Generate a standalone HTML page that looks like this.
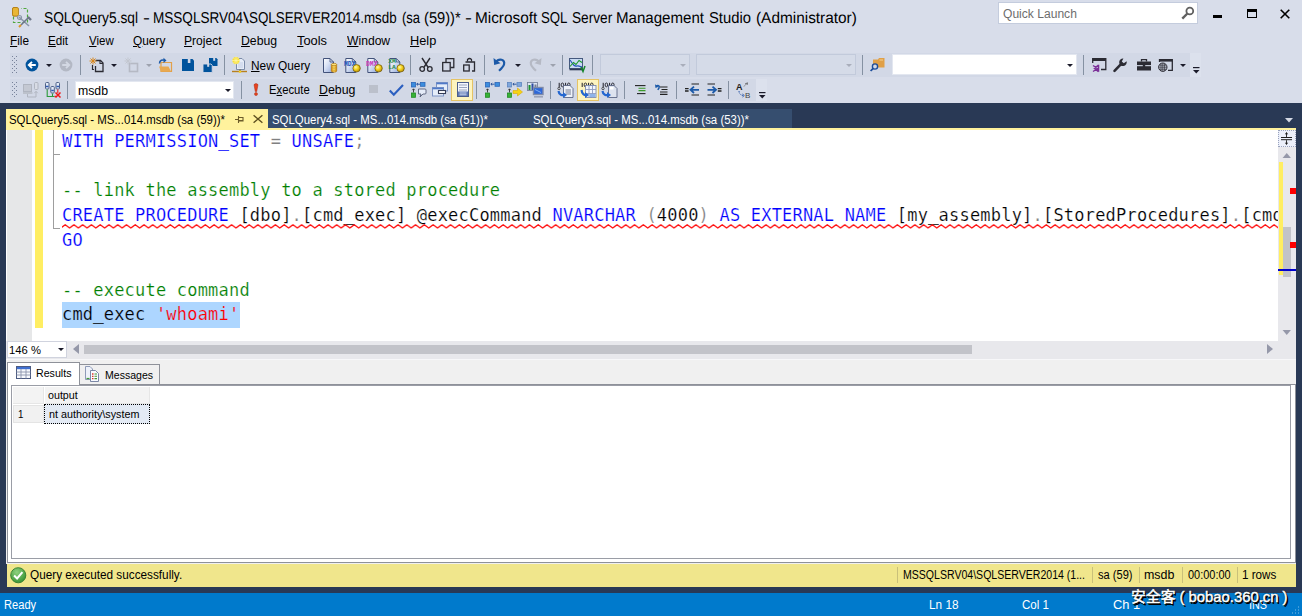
<!DOCTYPE html>
<html><head><meta charset="utf-8"><title>SQLQuery5.sql - Microsoft SQL Server Management Studio</title>
<style>
*{box-sizing:border-box;margin:0;padding:0}
html,body{width:1302px;height:616px;overflow:hidden;background:#D8DDEA}
body{position:relative;font-family:"Liberation Sans",sans-serif;font-size:12px;color:#000}
.a{position:absolute}
.t{position:absolute;white-space:pre;line-height:1;font-size:12px}
u{text-decoration:underline;text-underline-offset:1px;text-decoration-thickness:1px}
svg{position:absolute;overflow:visible}
.sep{position:absolute;width:1px;background:#8591A2}
.code{position:absolute;left:62px;white-space:pre;font-family:"DejaVu Sans Mono","Liberation Mono",monospace;font-size:17px;letter-spacing:0.2px;line-height:25px;height:25px;-webkit-text-stroke:0.2px #fff}
.us{-webkit-text-stroke:0.35px currentColor}
.kw{color:#0000FF}.cm{color:#008000}.gr{color:#808080}.st{color:#FF0000}
.hl{position:absolute;background:#FDF4BF;border:1px solid #E5C365}
#status .t{color:#fff;top:5.8px}
</style></head><body>

<!-- ===== title bar ===== -->
<svg style="left:12px;top:7px" width="21" height="21" viewBox="0 0 21 21">
 <rect x="1.5" y="1.5" width="14" height="14" fill="none" stroke="#4FA83D" stroke-width="1.2" stroke-dasharray="3 2"/>
 <rect x="0.5" y="0.5" width="6" height="8.5" rx="1.5" fill="#E9B634" stroke="#B07A12" stroke-width="0.8"/>
 <rect x="5" y="0" width="4" height="10" fill="#D8DDEA"/>
 <rect x="0.5" y="0.5" width="6" height="8.5" rx="1.5" fill="#E9B634" stroke="#B07A12" stroke-width="0.8"/>
 <path d="M7 10 L17 19" stroke="#8A96A8" stroke-width="1.6"/>
 <path d="M17 10 L9 18" stroke="#6C7687" stroke-width="1.6"/>
 <path d="M9 18 L7 20" stroke="#D9962A" stroke-width="2"/>
 <path d="M16 10 l3 3" stroke="#6C7687" stroke-width="2.4"/>
 <circle cx="7.5" cy="10.5" r="2" fill="none" stroke="#8A96A8" stroke-width="1.2"/>
</svg>
<div class="t" id="t1" style="left:43.91px;top:11.3px;font-size:15.7px;text-rendering:geometricPrecision;transform-origin:0 0;transform:scaleX(0.8768)">SQLQuery5.sql </div>
<div class="t" id="t2" style="left:143.13px;top:11.3px;font-size:15.7px;text-rendering:geometricPrecision;transform-origin:0 0;transform:scaleX(1.3333)">- </div>
<div class="t" id="t3" style="left:152.75px;top:11.3px;font-size:15.7px;text-rendering:geometricPrecision;transform-origin:0 0;transform:scaleX(0.8633)">MSSQLSRV04</div>
<div class="t" id="t4" style="left:243.00px;top:11.3px;font-size:15.7px;text-rendering:geometricPrecision;transform-origin:0 0;transform:scaleX(1.3412)">\</div>
<div class="t" id="t5" style="left:248.89px;top:11.3px;font-size:15.7px;text-rendering:geometricPrecision;transform-origin:0 0;transform:scaleX(0.8518)">SQLSERVER2014.msdb </div>
<div class="t" id="t6" style="left:401.70px;top:11.3px;font-size:15.7px;text-rendering:geometricPrecision;transform-origin:0 0;transform:scaleX(0.8289)">(sa </div>
<div class="t" id="t7" style="left:424.39px;top:11.3px;font-size:15.7px;text-rendering:geometricPrecision;transform-origin:0 0;transform:scaleX(0.9342)">(59))* </div>
<div class="t" id="t8" style="left:464.76px;top:11.3px;font-size:15.7px;text-rendering:geometricPrecision;transform-origin:0 0;transform:scaleX(1.3333)">- </div>
<div class="t" id="t9" style="left:474.54px;top:11.3px;font-size:15.7px;text-rendering:geometricPrecision;transform-origin:0 0;transform:scaleX(0.9783)">Microsoft </div>
<div class="t" id="t10" style="left:541.41px;top:11.3px;font-size:15.7px;text-rendering:geometricPrecision;transform-origin:0 0;transform:scaleX(0.8430)">SQL </div>
<div class="t" id="t11" style="left:571.73px;top:11.3px;font-size:15.7px;text-rendering:geometricPrecision;transform-origin:0 0;transform:scaleX(0.8711)">Server </div>
<div class="t" id="t12" style="left:616.21px;top:11.3px;font-size:15.7px;text-rendering:geometricPrecision;transform-origin:0 0;transform:scaleX(0.9607)">Management </div>
<div class="t" id="t13" style="left:709.38px;top:11.3px;font-size:15.7px;text-rendering:geometricPrecision;transform-origin:0 0;transform:scaleX(0.9434)">Studio </div>
<div class="t" id="t14" style="left:756.43px;top:11.3px;font-size:15.7px;text-rendering:geometricPrecision;transform-origin:0 0;transform:scaleX(0.9806)">(Administrator)</div>
<div class="a" style="left:998px;top:2px;width:199.5px;height:21.5px;background:#fff;border:1px solid #C4CCDD"></div>
<div class="t" id="qlt" style="left:1002.50px;top:8px;color:#6D6D6D;transform-origin:0 0;transform:scaleX(1.0069)">Quick Launch</div>
<svg style="left:1181px;top:5.5px" width="14" height="14" viewBox="0 0 14 14"><circle cx="8.8" cy="5" r="3.4" fill="none" stroke="#606060" stroke-width="1.8"/><path d="M6.4 7.5 L1.3 12.6" stroke="#606060" stroke-width="2.4"/></svg>
<div class="a" style="left:1213px;top:15px;width:9px;height:3px;background:#000"></div>
<div class="a" style="left:1246.5px;top:9px;width:10px;height:9px;border:1px solid #000;border-top-width:3px"></div>
<svg style="left:1280px;top:9px" width="10" height="10" viewBox="0 0 10 10"><path d="M0.7 0.7 L9.3 9.3 M9.3 0.7 L0.7 9.3" stroke="#000" stroke-width="1.6"/></svg>

<!-- ===== menu ===== -->
<div class="t" id="m1" style="left:9.85px;top:35px;transform-origin:0 0;transform:scaleX(0.9833)"><u>F</u>ile</div>
<div class="t" id="m2" style="left:47.84px;top:35px;transform-origin:0 0;transform:scaleX(0.9722)"><u>E</u>dit</div>
<div class="t" id="m3" style="left:88.70px;top:35px;transform-origin:0 0;transform:scaleX(0.9592)"><u>V</u>iew</div>
<div class="t" id="m4" style="left:132.70px;top:35px;transform-origin:0 0;transform:scaleX(0.9906)"><u>Q</u>uery</div>
<div class="t" id="m5" style="left:184.27px;top:35px;transform-origin:0 0;transform:scaleX(1.0055)"><u>P</u>roject</div>
<div class="t" id="m6" style="left:241.12px;top:35px;transform-origin:0 0;transform:scaleX(1.0209)"><u>D</u>ebug</div>
<div class="t" id="m7" style="left:296.93px;top:35px;transform-origin:0 0;transform:scaleX(1.0716)"><u>T</u>ools</div>
<div class="t" id="m8" style="left:347.20px;top:35px;transform-origin:0 0;transform:scaleX(1.0105)"><u>W</u>indow</div>
<div class="t" id="m9" style="left:409.77px;top:35px;transform-origin:0 0;transform:scaleX(1.0624)"><u>H</u>elp</div>
<!-- ===== toolbar row 1 ===== -->
<svg width="0" height="0" style="left:0;top:0"><defs><linearGradient id="dg" x1="0" y1="0" x2="1" y2="1"><stop offset="0" stop-color="#FFFFFF"/><stop offset="0.45" stop-color="#D5DFF3"/><stop offset="1" stop-color="#8FA6DA"/></linearGradient><radialGradient id="yb" cx="0.38" cy="0.35" r="0.75"><stop offset="0" stop-color="#FFF7A8"/><stop offset="0.45" stop-color="#F5D21C"/><stop offset="1" stop-color="#A87E08"/></radialGradient><linearGradient id="cy" x1="0" y1="0" x2="1" y2="0"><stop offset="0" stop-color="#D98E12"/><stop offset="0.5" stop-color="#FBE069"/><stop offset="1" stop-color="#D08A10"/></linearGradient></defs></svg>

<div class="a" style="left:10px;top:53px;width:1180px;height:24px;background:#D2D8E6"></div>
<div class="a" style="left:1190px;top:53px;width:11px;height:24px;background:#DCE1ED"></div>
<svg style="left:12px;top:56px" width="5" height="18" viewBox="0 0 5 18"><defs><pattern id="gp1" width="4" height="4" patternUnits="userSpaceOnUse"><rect x="0" y="0" width="1" height="1" fill="#77829A"/><rect x="2" y="2" width="1" height="1" fill="#77829A"/></pattern></defs><rect width="5" height="18" fill="url(#gp1)"/></svg>
<svg style="left:25px;top:58px" width="14" height="14" viewBox="0 0 14 14"><circle cx="7" cy="7" r="6.4" fill="#00539C"/><path d="M10.8 7 H4.2 M7 3.8 L3.8 7 L7 10.2" fill="none" stroke="#fff" stroke-width="1.9"/></svg>
<svg style="left:46px;top:64px" width="6" height="3.4" viewBox="0 0 7 4"><path d="M0 0 H7 L3.5 3.6 Z" fill="#1B1B2A"/></svg>
<svg style="left:59px;top:58px" width="14" height="14" viewBox="0 0 14 14"><circle cx="7" cy="7" r="6.4" fill="#B3B8C4"/><path d="M3.2 7 H9.8 M7 3.8 L10.2 7 L7 10.2" fill="none" stroke="#D3D8E3" stroke-width="1.9"/></svg>
<div class="sep" style="left:80px;top:55px;height:20px"></div>
<svg style="left:89px;top:57px" width="16" height="16" viewBox="0 0 16 16"><path d="M6.5 3.5 H11.5 L14 6 V14.5 H6.5 V9" fill="none" stroke="#2B2B33" stroke-width="1.3"/><path d="M11 3.5 V6.5 H14" fill="none" stroke="#2B2B33" stroke-width="1.1"/><path d="M3.5 8 V12.5 H5" fill="none" stroke="#2B2B33" stroke-width="1.2"/><path d="M4 0.5 V7.5 M0.5 4 H7.5 M1.5 1.5 L6.5 6.5 M6.5 1.5 L1.5 6.5" stroke="#D8861C" stroke-width="1"/></svg>
<svg style="left:111px;top:64px" width="6" height="3.4" viewBox="0 0 7 4"><path d="M0 0 H7 L3.5 3.6 Z" fill="#1B1B2A"/></svg>
<svg style="left:124px;top:57px" width="16" height="16" viewBox="0 0 16 16"><rect x="5.5" y="6.5" width="8" height="8" fill="none" stroke="#B5B9C4" stroke-width="1.6"/><path d="M4 0.5 V7.5 M0.5 4 H7.5 M1.5 1.5 L6.5 6.5 M6.5 1.5 L1.5 6.5" stroke="#C2C6CF" stroke-width="1"/></svg>
<svg style="left:146px;top:64px" width="6" height="3.4" viewBox="0 0 7 4"><path d="M0 0 H7 L3.5 3.6 Z" fill="#9DA2AE"/></svg>
<svg style="left:158px;top:57px" width="16" height="16" viewBox="0 0 16 16"><path d="M3 5.5 H13.5 V14.5 H3 Z" fill="none" stroke="#E2A04A" stroke-width="1.2"/><path d="M1 9.5 H10.5 L13 14.5 H3 Z" fill="#E8A951"/><path d="M1.5 6.5 C1.5 3 4.5 2.6 7 3.2" fill="none" stroke="#1C5AA8" stroke-width="1.6"/><path d="M5.5 0.8 L8.5 3.4 L5.5 6 Z" fill="#1C5AA8"/></svg>
<svg style="left:182px;top:58.5px" width="12" height="12" viewBox="0 0 12 12"><path d="M0 0 H10.5 L12 1.5 V12 H0 Z" fill="#00539C"/><rect x="5.8" y="0" width="2.6" height="4" fill="#D2D8E6"/></svg>
<svg style="left:203px;top:57.5px" width="14.5" height="14.5" viewBox="0 0 14.5 14.5"><path d="M6 0 H13.3 L14.5 1.2 V8 H6 Z" fill="#00539C"/><rect x="10.2" y="0" width="2" height="2.8" fill="#D2D8E6"/><path d="M0 6 H8 L9.2 7.2 V14.5 H0 Z" fill="#00539C" stroke="#D2D8E6" stroke-width="0.9"/><rect x="4.2" y="6" width="2" height="2.8" fill="#D2D8E6"/></svg>
<div class="sep" style="left:224px;top:55px;height:20px"></div>
<svg style="left:231px;top:56px" width="17" height="18" viewBox="0 0 17 18"><path d="M5.5 2.5 H11 L13.5 5 V13.5 H5.5 Z" fill="#E6ECF8" stroke="#7B8BA8" stroke-width="1"/><path d="M7 9 H12 M7 11 H12 M7 7 H12" stroke="#B9C6E0" stroke-width="0.8"/><path d="M1 15.5 H16" stroke="#B8801E" stroke-width="1.4"/><path d="M9 13.5 V15.5" stroke="#7B6A3A" stroke-width="1.4"/><circle cx="9" cy="15.7" r="1.3" fill="#F3D12B"/><circle cx="5" cy="4.5" r="3.6" fill="#F7DF3A"/><path d="M5 0.5 V8.5 M1 4.5 H9 M2.2 1.7 L7.8 7.3 M7.8 1.7 L2.2 7.3" stroke="#FFF6A8" stroke-width="0.7"/></svg>
<div class="t" id="nq" style="left:250.94px;top:59.7px;transform-origin:0 0;transform:scaleX(0.9872)"><u>N</u>ew Query</div>
<svg style="left:323px;top:58px" width="15" height="15" viewBox="0 0 15 15"><path d="M0.5 0.5 H7 L10.5 4 V14.5 H0.5 Z" fill="url(#dg)" stroke="#42527A" stroke-width="1"/><path d="M7 0.5 V4 H10.5" fill="none" stroke="#42527A" stroke-width="0.8"/><path d="M8.3 6.5 V13 A2.7 1.2 0 0 0 13.7 13 V6.5 Z" fill="url(#cy)" stroke="#A66C0A" stroke-width="0.6"/><ellipse cx="11" cy="6.5" rx="2.7" ry="1.2" fill="#FBE27A" stroke="#A66C0A" stroke-width="0.6"/><path d="M8.3 9 A2.7 1.2 0 0 0 13.7 9 M8.3 11.2 A2.7 1.2 0 0 0 13.7 11.2" fill="none" stroke="#C98D14" stroke-width="0.5"/></svg>
<svg style="left:344px;top:58px" width="17" height="15" viewBox="0 0 17 15"><g transform="translate(1.3,0)"><path d="M0.5 0.5 H7 L10.5 4 V14.5 H0.5 Z" fill="url(#dg)" stroke="#42527A" stroke-width="1"/><path d="M7 0.5 V4 H10.5" fill="none" stroke="#42527A" stroke-width="0.8"/></g><text x="0" y="7.6" font-family="Liberation Mono,monospace" font-weight="bold" font-size="6.4" textLength="11.5" lengthAdjust="spacingAndGlyphs" fill="#1B55B8">MDX</text><circle cx="12.6" cy="10.3" r="3.7" fill="url(#yb)" stroke="#6E5606" stroke-width="0.7"/></svg>
<svg style="left:366px;top:58px" width="17" height="15" viewBox="0 0 17 15"><g transform="translate(1.3,0)"><path d="M0.5 0.5 H7 L10.5 4 V14.5 H0.5 Z" fill="url(#dg)" stroke="#42527A" stroke-width="1"/><path d="M7 0.5 V4 H10.5" fill="none" stroke="#42527A" stroke-width="0.8"/></g><text x="0" y="7.6" font-family="Liberation Mono,monospace" font-weight="bold" font-size="6.4" textLength="11.5" lengthAdjust="spacingAndGlyphs" fill="#C835BC">DMX</text><circle cx="12.6" cy="10.3" r="3.7" fill="url(#yb)" stroke="#6E5606" stroke-width="0.7"/></svg>
<svg style="left:388px;top:58px" width="17" height="15" viewBox="0 0 17 15"><g transform="translate(1.3,0)"><path d="M0.5 0.5 H7 L10.5 4 V14.5 H0.5 Z" fill="url(#dg)" stroke="#42527A" stroke-width="1"/><path d="M7 0.5 V4 H10.5" fill="none" stroke="#42527A" stroke-width="0.8"/></g><text x="0.3" y="5.4" font-family="Liberation Mono,monospace" font-weight="bold" font-size="5.8" textLength="7.6" lengthAdjust="spacingAndGlyphs" fill="#1E8B4A">XM</text><text x="0.3" y="11.2" font-family="Liberation Mono,monospace" font-weight="bold" font-size="5.8" textLength="7.6" lengthAdjust="spacingAndGlyphs" fill="#1E8B4A">LA</text><circle cx="12.6" cy="10.3" r="3.7" fill="url(#yb)" stroke="#6E5606" stroke-width="0.7"/></svg>
<div class="sep" style="left:410px;top:55px;height:20px"></div>
<svg style="left:419px;top:58px" width="14" height="14" viewBox="0 0 14 14"><path d="M3 0 L9.2 9.5 M11 0 L4.8 9.5" stroke="#2B2B33" stroke-width="1.4" fill="none"/><circle cx="3.2" cy="11" r="2.3" fill="none" stroke="#2B2B33" stroke-width="1.3"/><circle cx="10.8" cy="11" r="2.3" fill="none" stroke="#2B2B33" stroke-width="1.3"/></svg>
<svg style="left:442px;top:58px" width="13" height="14" viewBox="0 0 13 14"><path d="M4 4 V0.7 H11.8 V9.5 H8.5" fill="none" stroke="#2B2B33" stroke-width="1.3"/><rect x="0.7" y="4.5" width="7.5" height="8.5" fill="none" stroke="#2B2B33" stroke-width="1.3"/></svg>
<svg style="left:463px;top:58px" width="13" height="14" viewBox="0 0 13 14"><path d="M4.5 3.5 V1.5 Q6.5 -0.5 8.5 1.5 V3.5" fill="none" stroke="#2B2B33" stroke-width="1.2"/><path d="M2.5 4 H11.5 V13 H9" fill="none" stroke="#2B2B33" stroke-width="1.3"/><rect x="0.7" y="7" width="5.5" height="6" fill="none" stroke="#2B2B33" stroke-width="1.3"/></svg>
<div class="sep" style="left:484px;top:55px;height:20px"></div>
<svg style="left:493px;top:57px" width="14" height="15" viewBox="0 0 14 15"><path d="M2.5 5.5 C6 0.5 12.5 2.5 11 7.5 C10.2 10 8 12 6 13.8" fill="none" stroke="#1C5AA8" stroke-width="2.2"/><path d="M0.5 1 L1.2 8 L7.5 6.2 Z" fill="#1C5AA8"/></svg>
<svg style="left:515px;top:64px" width="6" height="3.4" viewBox="0 0 7 4"><path d="M0 0 H7 L3.5 3.6 Z" fill="#1B1B2A"/></svg>
<svg style="left:528px;top:57px" width="14" height="15" viewBox="0 0 14 15"><path d="M11.5 5.5 C8 0.5 1.5 2.5 3 7.5 C3.8 10 6 12 8 13.8" fill="none" stroke="#B5B9C4" stroke-width="2.2"/><path d="M13.5 1 L12.8 8 L6.5 6.2 Z" fill="#B5B9C4"/></svg>
<svg style="left:550px;top:64px" width="6" height="3.4" viewBox="0 0 7 4"><path d="M0 0 H7 L3.5 3.6 Z" fill="#9DA2AE"/></svg>
<div class="sep" style="left:562px;top:55px;height:20px"></div>
<svg style="left:569px;top:58px" width="17" height="15" viewBox="0 0 17 15"><rect x="0.5" y="0.5" width="13" height="10" fill="#C9DBF3" stroke="#45597E"/><path d="M0.5 11.5 H14" stroke="#2E3A55" stroke-width="1.6"/><path d="M1 2 C4 6 5 9 8 8 C10 7.5 11 8.5 13 9" fill="none" stroke="#1E50B4" stroke-width="1.1"/><path d="M1 8.5 L4.5 4.5 L7 6.5 L10 2.5 L13 4.5" fill="none" stroke="#1E9B2E" stroke-width="1.1"/><path d="M12 9 L14 13.5 L16 8" fill="none" stroke="#14852A" stroke-width="1.5"/></svg>
<div class="sep" style="left:592px;top:55px;height:20px"></div>
<div class="a" style="left:600px;top:54px;width:90px;height:21px;border:1px solid #C2CADB;background:#D5DBE8"></div>
<svg style="left:680px;top:64px" width="6" height="3.4" viewBox="0 0 7 4"><path d="M0 0 H7 L3.5 3.6 Z" fill="#A9AEBB"/></svg>
<div class="a" style="left:696px;top:54px;width:160px;height:21px;border:1px solid #C2CADB;background:#D5DBE8"></div>
<svg style="left:846px;top:64px" width="6" height="3.4" viewBox="0 0 7 4"><path d="M0 0 H7 L3.5 3.6 Z" fill="#A9AEBB"/></svg>
<div class="sep" style="left:862px;top:55px;height:20px"></div>
<svg style="left:870px;top:57px" width="16" height="16" viewBox="0 0 16 16"><path d="M3 2.5 H8 L9 1 H14.5 V10.5 H3 Z" fill="#E0A047"/><path d="M9.5 3 H13" stroke="#F4CF8E" stroke-width="1"/><circle cx="5" cy="9.5" r="2.6" fill="#D2D8E6" stroke="#1C4E9C" stroke-width="1.4"/><path d="M3.2 11.3 L0.6 14" stroke="#1C4E9C" stroke-width="1.8"/></svg>
<div class="a" style="left:892px;top:54px;width:185px;height:21px;background:#fff;border:1px solid #E3E7F0"></div>
<svg style="left:1067px;top:64px" width="6" height="3.4" viewBox="0 0 7 4"><path d="M0 0 H7 L3.5 3.6 Z" fill="#1B1B2A"/></svg>
<div class="sep" style="left:1083px;top:55px;height:20px"></div>
<svg style="left:1092px;top:58px" width="15" height="14" viewBox="0 0 15 14"><path d="M0.7 5 V0.7 H13.8 V11.5 H9" fill="none" stroke="#2B2B33" stroke-width="1.3"/><path d="M0.7 0.7 H13.8 V3 H0.7 Z" fill="#2B2B33"/><path d="M1 7.5 L5.5 10.5 L1 13.5 M6.5 6.8 V13.8 M6.5 7 L2.5 10.5 L6.5 13.6" fill="none" stroke="#7B2F98" stroke-width="1.5"/></svg>
<svg style="left:1113px;top:58px" width="15" height="14" viewBox="0 0 15 14"><path d="M1.5 12.8 L8 6.2" stroke="#2B2B33" stroke-width="2.6" stroke-linecap="round"/><path d="M13.6 3.2 A3.8 3.8 0 1 1 10.4 0.5 L8.8 3.4 L10.8 5.2 Z" fill="#2B2B33"/></svg>
<svg style="left:1137px;top:59px" width="14" height="12" viewBox="0 0 14 12"><path d="M4.5 2.5 V0.7 H9.5 V2.5" fill="none" stroke="#2B2B33" stroke-width="1.3"/><rect x="0" y="2.5" width="14" height="3.6" fill="#2B2B33"/><rect x="0" y="7.2" width="14" height="4.3" fill="#2B2B33"/><rect x="5.8" y="5.5" width="2.4" height="2.6" fill="#2B2B33"/></svg>
<svg style="left:1158px;top:59px" width="15" height="13" viewBox="0 0 15 13"><path d="M1.5 3 V0.7 H14.3 V11.3 H10" fill="none" stroke="#2B2B33" stroke-width="1.3"/><path d="M1.5 0.7 H14.3 V2.6 H1.5 Z" fill="#2B2B33"/><circle cx="4.8" cy="8.2" r="4.2" fill="none" stroke="#2B2B33" stroke-width="1"/><path d="M0.6 8.2 H9 M4.8 4 V12.4 M1.2 6.2 H8.4 M1.2 10.2 H8.4 M3 4.5 V12 M6.6 4.5 V12" stroke="#2B2B33" stroke-width="0.7" fill="none"/></svg>
<svg style="left:1180px;top:64px" width="6" height="3.4" viewBox="0 0 7 4"><path d="M0 0 H7 L3.5 3.6 Z" fill="#1B1B2A"/></svg>
<svg style="left:1193px;top:67px" width="7" height="7" viewBox="0 0 7 7"><path d="M0 0.6 H6.5" stroke="#1B1B2A" stroke-width="1.2"/><path d="M0 3 H6.5 L3.25 6.5 Z" fill="#1B1B2A"/></svg>
<!-- ===== toolbar row 2 ===== -->
<div class="a" style="left:10px;top:79px;width:746px;height:22px;background:#D2D8E6"></div>
<div class="a" style="left:756px;top:79px;width:11px;height:22px;background:#DCE1ED"></div>
<svg style="left:12px;top:82px" width="5" height="15" viewBox="0 0 5 15"><defs><pattern id="gp2" width="4" height="4" patternUnits="userSpaceOnUse"><rect x="0" y="0" width="1" height="1" fill="#77829A"/><rect x="2" y="2" width="1" height="1" fill="#77829A"/></pattern></defs><rect width="5" height="15" fill="url(#gp2)"/></svg>
<svg style="left:23px;top:82px" width="16" height="16" viewBox="0 0 16 16"><rect x="0.5" y="2.5" width="8" height="7" fill="#C4C8D2" stroke="#B0B5C0"/><rect x="0" y="10" width="9.5" height="2" fill="#BCC1CB"/><rect x="11.5" y="0.5" width="3.5" height="7" rx="1" fill="#D8DCE5" stroke="#B0B5C0"/><path d="M4.5 12 V15 H13 V9.5 M11.3 11.2 L13 9.3 L14.7 11.2" fill="none" stroke="#B0B5C0" stroke-width="1"/></svg>
<svg style="left:45px;top:82px" width="16" height="16" viewBox="0 0 16 16"><rect x="0.5" y="0.5" width="3.5" height="6.5" rx="1" fill="#E4ECF8" stroke="#4F628A"/><rect x="11" y="0.5" width="3.5" height="6.5" rx="1" fill="#E4ECF8" stroke="#4F628A"/><rect x="5.8" y="4.5" width="3.5" height="6.5" rx="1" fill="#E4ECF8" stroke="#4F628A"/><path d="M1 4.5 H3.5 M11.5 4.5 H14 M6.3 8.5 H8.8" stroke="#2C57B0" stroke-width="1.4"/><path d="M2.2 7.5 V14.5 H9.5 M7.5 11.5 V14.5" fill="none" stroke="#2B9A3A" stroke-width="1.1"/><path d="M12.8 7.5 V11" stroke="#E22" stroke-width="1.1"/><path d="M10.5 10.5 L15.5 15.5 M15.5 10.5 L10.5 15.5 M9.5 14.5 H12" stroke="#F01818" stroke-width="1.5"/></svg>
<div class="sep" style="left:67px;top:81px;height:18px"></div>
<div class="a" style="left:75px;top:81px;width:159px;height:18px;background:#fff;border:1px solid #E3E7F0"></div>
<div class="t" id="msdb" style="left:77.91px;top:84.5px;transform-origin:0 0;transform:scaleX(1.0230)">msdb</div>
<svg style="left:225px;top:89px" width="6" height="3" viewBox="0 0 6 3"><path d="M0 0 H6 L3 3 Z" fill="#1B1B2A"/></svg>
<div class="sep" style="left:241px;top:81px;height:18px"></div>
<svg style="left:253px;top:83px" width="6" height="13" viewBox="0 0 6 13"><path d="M1 1.6 Q3 -0.6 5 1.6 L3.7 8.6 H2.3 Z" fill="#E8431F" stroke="#A82A10" stroke-width="0.5"/><circle cx="3" cy="11" r="1.5" fill="#E8431F" stroke="#A82A10" stroke-width="0.5"/></svg>
<div class="t" id="exe" style="left:268.50px;top:84px;transform-origin:0 0;transform:scaleX(0.9401)">E<u>x</u>ecute</div>
<div class="t" id="dbg" style="left:319.05px;top:84px;transform-origin:0 0;transform:scaleX(1.0296)"><u>D</u>ebug</div>
<div class="a" style="left:369px;top:85px;width:9px;height:8px;background:#BBC0CB"></div>
<svg style="left:389px;top:84px" width="15" height="12" viewBox="0 0 15 12"><path d="M0.8 6.5 L4.8 10.8 L14 1" fill="none" stroke="#2B5FC0" stroke-width="2.1"/></svg>
<svg style="left:411px;top:82px" width="16" height="16" viewBox="0 0 16 16"><rect x="0.5" y="0.5" width="4" height="4.5" fill="#3C8DDE" stroke="#2C67B8" stroke-width="0.8"/><rect x="9.5" y="0.5" width="4.5" height="3.8" fill="#3C8DDE" stroke="#2C67B8" stroke-width="0.8"/><path d="M9 2.2 H5.8 M7 1 L5.6 2.2 L7 3.4" fill="none" stroke="#1F4B96" stroke-width="0.9"/><path d="M2.5 10.5 V7 M1.3 8.2 L2.5 6.8 L3.7 8.2" fill="none" stroke="#333" stroke-width="0.9"/><rect x="0.5" y="11" width="4" height="4.3" fill="#37B236" stroke="#1F8B22" stroke-width="0.8"/><path d="M7.5 7 H14 Q15 7 15 8 V11 Q15 12 14 12 H12 L9 15 L10 12 H7.5 Z" fill="#E5ECF8" stroke="#555F78" stroke-width="0.9"/></svg>
<svg style="left:432px;top:82px" width="17" height="15" viewBox="0 0 17 15"><rect x="4.5" y="0.5" width="11" height="8.5" fill="#E5EDF9" stroke="#7C93C4"/><path d="M4.5 1.5 H15.5" stroke="#4F79C8" stroke-width="1.6"/><rect x="0.5" y="5.5" width="11" height="8.5" fill="#E5EDF9" stroke="#7C93C4"/><path d="M0.5 6.5 H11.5" stroke="#4F79C8" stroke-width="1.6"/><rect x="6.5" y="8.5" width="7" height="3" fill="#fff" stroke="#333B55" stroke-width="1.1"/></svg>
<div class="hl" style="left:451px;top:79px;width:22px;height:22px"></div>
<svg style="left:457px;top:82px" width="12" height="15" viewBox="0 0 12 15"><rect x="0.5" y="0.5" width="11" height="14" fill="#F4F7FD" stroke="#4C5E8C"/><path d="M2 3 H10 M2 5.5 H10 M2 8 H10" stroke="#8E9BB8" stroke-width="0.9"/><rect x="1" y="9.5" width="10" height="4.5" fill="#5E78B5"/><path d="M2.5 11 H9.5 M2.5 12.8 H9.5" stroke="#E6ECF8" stroke-width="0.8"/></svg>
<div class="sep" style="left:476px;top:81px;height:18px"></div>
<svg style="left:485px;top:82px" width="16" height="16" viewBox="0 0 16 16"><rect x="0.5" y="0.5" width="4" height="4.5" fill="#3C8DDE" stroke="#2C67B8" stroke-width="0.8"/><rect x="10" y="0.5" width="4.5" height="3.8" fill="#3C8DDE" stroke="#2C67B8" stroke-width="0.8"/><path d="M9.5 2.2 H6 M7.2 1 L5.8 2.2 L7.2 3.4" fill="none" stroke="#1F4B96" stroke-width="0.9"/><path d="M2.5 10.5 V7 M1.3 8.2 L2.5 6.8 L3.7 8.2" fill="none" stroke="#333" stroke-width="0.9"/><rect x="0.5" y="11" width="4" height="4.3" fill="#37B236" stroke="#1F8B22" stroke-width="0.8"/></svg>
<svg style="left:507px;top:82px" width="16" height="16" viewBox="0 0 16 16"><rect x="0.5" y="0.5" width="4" height="4.5" fill="#7FA7DC" stroke="#5E85C0" stroke-width="0.8"/><rect x="10" y="0.5" width="4.5" height="3.8" fill="#7FA7DC" stroke="#5E85C0" stroke-width="0.8"/><path d="M9.5 2.2 H6 M7.2 1 L5.8 2.2 L7.2 3.4" fill="none" stroke="#1F4B96" stroke-width="0.9"/><path d="M2.5 10.5 V7 M1.3 8.2 L2.5 6.8 L3.7 8.2" fill="none" stroke="#333" stroke-width="0.9"/><rect x="0.5" y="11" width="4" height="4.3" fill="#37B236" stroke="#1F8B22" stroke-width="0.8"/><path d="M6 8.5 H10.5 V6 L15.5 10 L10.5 14 V11.5 H6 Z" fill="#F6D313" stroke="#D9A90A" stroke-width="0.6"/></svg>
<svg style="left:527px;top:82px" width="17" height="16" viewBox="0 0 17 16"><rect x="0.5" y="0.5" width="10" height="8" fill="#DDE5F3" stroke="#6D7893" stroke-width="0.8"/><rect x="1.5" y="3" width="2" height="5" fill="#1E8F2E"/><rect x="4.5" y="1.5" width="2" height="6.5" fill="#2C4B9E"/><rect x="7.5" y="2.5" width="2" height="5.5" fill="#777F93"/><rect x="6.5" y="5.5" width="9.5" height="7" fill="#2E67D8" stroke="#7F8BA8" stroke-width="1.4"/><path d="M8 7.5 L14 10.5" stroke="#7DB1F8" stroke-width="1"/><path d="M7 14.8 H16" stroke="#9BA3B8" stroke-width="1.6"/></svg>
<div class="sep" style="left:550px;top:81px;height:18px"></div>
<svg style="left:557px;top:82px" width="17" height="16" viewBox="0 0 17 16"><path d="M2.2 0.8 V5 M8.6 0.8 V5" stroke="#1E1E28" stroke-width="1"/><ellipse cx="5.4" cy="2.9" rx="1.3" ry="1.9" fill="none" stroke="#1E1E28" stroke-width="0.9"/><ellipse cx="11.8" cy="2.9" rx="1.3" ry="1.9" fill="none" stroke="#1E1E28" stroke-width="0.9"/><path d="M6.5 3.5 H13 L16 6.5 V15.5 H6.5 Z" fill="#EEF2FA" stroke="#5B6786" stroke-width="0.9"/><path d="M8.5 8 H14 M8.5 10 H14 M8.5 12 H14" stroke="#555F78" stroke-width="0.8"/><circle cx="2" cy="6.5" r="1.2" fill="none" stroke="#222" stroke-width="0.7"/><path d="M1.5 9 C2 13 5 13.5 8 13" fill="none" stroke="#2467D0" stroke-width="2.2"/><path d="M6 10 L10 13 L6 16 Z" fill="#2467D0"/></svg>
<div class="hl" style="left:577px;top:79px;width:22px;height:22px"></div>
<svg style="left:580px;top:82px" width="17" height="16" viewBox="0 0 17 16"><path d="M2.2 0.8 V5 M8.6 0.8 V5" stroke="#1E1E28" stroke-width="1"/><ellipse cx="5.4" cy="2.9" rx="1.3" ry="1.9" fill="none" stroke="#1E1E28" stroke-width="0.9"/><ellipse cx="11.8" cy="2.9" rx="1.3" ry="1.9" fill="none" stroke="#1E1E28" stroke-width="0.9"/><rect x="5.5" y="3.5" width="10.5" height="12" fill="#F4F7FD" stroke="#7C8CB2" stroke-width="0.9"/><path d="M5.5 7.5 H16 M5.5 11.5 H16 M9 3.5 V15.5 M12.5 3.5 V15.5" stroke="#8E9CC0" stroke-width="0.9"/><rect x="9.5" y="12" width="6" height="3" fill="#8FB4EA"/><path d="M1.5 8 C2 12 4 13.5 7 13" fill="none" stroke="#2467D0" stroke-width="2.2"/><path d="M5 10 L9 13 L5 16 Z" fill="#2467D0"/></svg>
<svg style="left:601px;top:82px" width="17" height="16" viewBox="0 0 17 16"><path d="M2.2 0.8 V5 M8.6 0.8 V5" stroke="#1E1E28" stroke-width="1"/><ellipse cx="5.4" cy="2.9" rx="1.3" ry="1.9" fill="none" stroke="#1E1E28" stroke-width="0.9"/><ellipse cx="11.8" cy="2.9" rx="1.3" ry="1.9" fill="none" stroke="#1E1E28" stroke-width="0.9"/><path d="M7.5 3.5 H13 L16 6.5 V15.5 H7.5 Z" fill="#DDE3EF" stroke="#5B6786" stroke-width="0.9"/><rect x="9" y="5" width="3.5" height="2.5" fill="#fff"/><circle cx="2" cy="6.5" r="1.2" fill="none" stroke="#222" stroke-width="0.7"/><path d="M1.5 9 C2 13 5 13.5 8 13" fill="none" stroke="#2467D0" stroke-width="2.2"/><path d="M6 10 L10 13 L6 16 Z" fill="#2467D0"/></svg>
<div class="sep" style="left:624px;top:81px;height:18px"></div>
<svg style="left:635px;top:85px" width="11" height="10" viewBox="0 0 11 10"><path d="M0 0.6 H10.5" stroke="#222" stroke-width="1.1"/><path d="M3.5 3.2 H10.5 M3.5 5.6 H10.5" stroke="#3A9B28" stroke-width="1.1"/><path d="M2 8.6 H10.5" stroke="#222" stroke-width="1.1"/></svg>
<svg style="left:655px;top:84px" width="13" height="11" viewBox="0 0 13 11"><path d="M5 3 H12.5 M6.5 5.5 H12.5 M5 8 H12.5 M5 10.4 H12.5" stroke="#222" stroke-width="1.1"/><path d="M1 2.5 C3 0.5 5 2 4 4 L2.8 5.8" fill="none" stroke="#1C5AA8" stroke-width="1.5"/><path d="M0 0.3 L0.5 4 L3.6 2.8 Z" fill="#1C5AA8"/></svg>
<div class="sep" style="left:676px;top:81px;height:18px"></div>
<svg style="left:685px;top:83px" width="15" height="13" viewBox="0 0 15 13"><path d="M6.5 1 H14 M6.5 12 H14" stroke="#222" stroke-width="1.1"/><path d="M0 5.6 H3.6 M0 8 H3.6" stroke="#222" stroke-width="1.3"/><path d="M14 6.8 H6 M9 3.6 L5.5 6.8 L9 10" fill="none" stroke="#1C5AA8" stroke-width="1.8"/></svg>
<svg style="left:707px;top:83px" width="15" height="13" viewBox="0 0 15 13"><path d="M0.5 1 H8 M0.5 12 H8" stroke="#222" stroke-width="1.1"/><path d="M10.8 5.6 H14.5 M10.8 8 H14.5" stroke="#222" stroke-width="1.3"/><path d="M0.5 6.8 H8.5 M5.5 3.6 L9 6.8 L5.5 10" fill="none" stroke="#1C5AA8" stroke-width="1.8"/></svg>
<div class="sep" style="left:728px;top:81px;height:18px"></div>
<svg style="left:736px;top:82px" width="16" height="16" viewBox="0 0 16 16"><text x="0" y="7.5" font-family="Liberation Sans,sans-serif" font-size="9" font-weight="bold" fill="#222">A</text><text x="9" y="15.5" font-family="Liberation Sans,sans-serif" font-size="8" fill="#444">B</text><path d="M9 2 L11.5 0.8 M11.5 0.8 L11 3" stroke="#555" stroke-width="0.8" fill="none"/><path d="M3 9 C3 12 5 13.5 8 13.5" fill="none" stroke="#2B57A8" stroke-width="1" stroke-dasharray="1.4 1.2"/><path d="M6.5 12 L8.3 13.5 L6.5 15" fill="none" stroke="#2B57A8" stroke-width="0.9"/><path d="M8 4.5 C9 3 10 2 11 1.5" fill="none" stroke="#666" stroke-width="0.8" stroke-dasharray="1.2 1"/></svg>
<svg style="left:759px;top:92px" width="7" height="7" viewBox="0 0 7 7"><path d="M0 0.6 H6.5" stroke="#1B1B2A" stroke-width="1.2"/><path d="M0 3 H6.5 L3.25 6.5 Z" fill="#1B1B2A"/></svg>
<!-- ===== document well ===== -->
<div class="a" style="left:0;top:103px;width:1302px;height:490px;background:#293955"></div>
<div class="a" style="left:6px;top:109px;width:262px;height:21px;background:#FFF29D"></div>
<div class="a" style="left:6px;top:128px;width:1290px;height:2px;background:#FFF29D"></div>
<div class="a" style="left:268px;top:109px;width:523.5px;height:19px;background:#364E6F"></div>
<div class="t" id="tab1" style="left:9.35px;top:114px;transform-origin:0 0;transform:scaleX(0.9524)">SQLQuery5.sql - MS...014.msdb (sa (59))*</div>
<div class="t" id="tab2" style="left:271.85px;top:114px;color:#fff;transform-origin:0 0;transform:scaleX(0.9524)">SQLQuery4.sql - MS...014.msdb (sa (51))*</div>
<div class="t" id="tab3" style="left:533.35px;top:114px;color:#fff;transform-origin:0 0;transform:scaleX(0.9524)">SQLQuery3.sql - MS...014.msdb (sa (53))*</div>
<svg style="left:235px;top:115px" width="9" height="9" viewBox="0 0 9 9"><path d="M0 4.5 H3.5 M3.5 1 V8 M3.5 2.5 H8 V6 H3.5 M3.5 5.5 H8" fill="none" stroke="#6B5B2A" stroke-width="1.1"/></svg>
<svg style="left:253px;top:115px" width="10" height="8" viewBox="0 0 10 8"><path d="M0.6 0.3 L9.4 7.7 M9.4 0.3 L0.6 7.7" stroke="#5E5020" stroke-width="1.4"/></svg>
<svg style="left:1285px;top:117.5px" width="8" height="4.6" viewBox="0 0 8 4.6"><path d="M0 0 H8 L4 4.6 Z" fill="#D5DAE5"/></svg>

<!-- ===== editor ===== -->
<div class="a" style="left:6px;top:130px;width:1272px;height:211px;background:#fff"></div>
<div class="a" style="left:7px;top:130px;width:25px;height:211px;background:#E6E7E8"></div>
<div class="a" style="left:35px;top:130px;width:8px;height:198px;background:#FFEE62"></div>
<div class="a" style="left:52.5px;top:130px;width:7px;height:24.5px;border-left:1.5px solid #9E9E9E;border-bottom:1px solid #9E9E9E"></div>
<div class="a" style="left:52.5px;top:154px;width:7px;height:75px;border-left:1.5px solid #9E9E9E;border-bottom:1px solid #9E9E9E"></div>
<div class="a" style="left:62px;top:302.2px;width:178px;height:25.8px;background:#ADD6FF"></div>

<div class="code" style="top:128.8px"><span class="kw">WITH PERMISSION<span class="us">_</span>SET</span> <span class="gr">=</span> <span class="kw">UNSAFE</span><span class="gr">;</span></div>
<div class="code cm" style="top:177.7px">-- link the assembly to a stored procedure</div>
<div class="code" style="top:202.7px;width:1216px;overflow:hidden"><span class="kw">CREATE PROCEDURE</span> [dbo]<span class="gr">.</span>[cmd<span class="us">_</span>exec] @execCommand <span class="kw">NVARCHAR</span> <span class="gr">(</span>4000<span class="gr">)</span> <span class="kw">AS EXTERNAL NAME</span> [my<span class="us">_</span>assembly]<span class="gr">.</span>[StoredProcedures]<span class="gr">.</span>[cmd<span class="us">_</span>exec]</div>
<svg style="left:62px;top:223px" width="1216" height="7" viewBox="0 0 1216 7"><defs><pattern id="sq" x="1" width="8.76" height="7" patternUnits="userSpaceOnUse"><path d="M-2.19 5 L2.19 1.7 L6.57 5 L10.95 1.7" fill="none" stroke="#FF1010" stroke-width="1.3" stroke-linejoin="round"/></pattern></defs><rect width="1216" height="7" fill="url(#sq)"/></svg>
<div class="code kw" style="top:227.7px">GO</div>
<div class="code cm" style="top:277.7px">-- execute command</div>
<div class="code" style="top:301.7px;-webkit-text-stroke-color:#ADD6FF">cmd<span class="us">_</span>exec <span class="st">'whoami'</span></div>

<!-- vertical scrollbar -->
<div class="a" style="left:1278px;top:130px;width:18px;height:211px;background:#E8E8EC"></div>
<div class="a" style="left:1278px;top:130px;width:18px;height:17px;background:#EBEFFA;border:1px dotted #9AA3BD"></div>
<svg style="left:1281px;top:132px" width="11" height="13" viewBox="0 0 11 13"><path d="M0 5.5 H11 M0 7.7 H11" stroke="#1E1E1E" stroke-width="1"/><path d="M5.5 0.5 V5 M5.5 8.2 V12.5" stroke="#1E1E1E" stroke-width="0.9"/><path d="M3.8 2.3 L5.5 0.3 L7.2 2.3 Z M3.8 10.7 L5.5 12.7 L7.2 10.7 Z" fill="#1E1E1E"/></svg>
<svg style="left:1282px;top:153px" width="9.5" height="5" viewBox="0 0 10 6"><path d="M5 0 L10 6 H0 Z" fill="#9598A9"/></svg>
<svg style="left:1282px;top:330px" width="9.5" height="5" viewBox="0 0 10 6"><path d="M0 0 H10 L5 6 Z" fill="#9598A9"/></svg>
<div class="a" style="left:1283px;top:227px;width:8px;height:50px;background:#C2C3C9"></div>
<div class="a" style="left:1279px;top:162px;width:4px;height:113px;background:#FFEE62"></div>
<div class="a" style="left:1290px;top:188px;width:6px;height:6px;background:#FF0000"></div>
<div class="a" style="left:1290px;top:242px;width:6px;height:6px;background:#FF0000"></div>
<div class="a" style="left:1278px;top:269px;width:18px;height:2px;background:#0000CD"></div>

<!-- horizontal scrollbar row -->
<div class="a" style="left:6px;top:341px;width:1290px;height:18px;background:#E8E8EC"></div>
<div class="a" style="left:84px;top:345px;width:888px;height:9px;background:#C2C3C9"></div>
<svg style="left:73px;top:344px" width="6" height="10" viewBox="0 0 6 10"><path d="M6 0 V10 L0 5 Z" fill="#9598A9"/></svg>
<svg style="left:1267px;top:344px" width="6" height="10" viewBox="0 0 6 10"><path d="M0 0 V10 L6 5 Z" fill="#9598A9"/></svg>
<div class="a" style="left:7px;top:341px;width:60px;height:17px;background:#fff;border:1px solid #D0D3DE"></div>
<div class="t" id="zoom" style="left:8.98px;top:344.5px;font-size:11.5px;transform-origin:0 0;transform:scaleX(0.9778)">146 %</div>
<svg style="left:58px;top:348px" width="6" height="3" viewBox="0 0 6 3"><path d="M0 0 H6 L3 3 Z" fill="#1B1B2A"/></svg>
<!-- ===== results pane ===== -->
<div class="a" style="left:6px;top:359px;width:1290px;height:204.5px;background:#F0F0F0"></div>
<div class="a" style="left:6px;top:359px;width:1290px;height:1px;background:#F7F7F9"></div>
<div class="a" style="left:79px;top:364px;width:81px;height:20.5px;background:#F0F0F0;border:1px solid #8E9199"></div>
<div class="a" style="left:7px;top:383.5px;width:1288.5px;height:179px;background:#fff;border:1px solid #8E9199"></div>
<div class="a" style="left:11px;top:385px;width:1280.4px;height:174px;background:#fff;border:1px solid #9A9DA6"></div>
<div class="a" style="left:7px;top:362px;width:73px;height:23px;background:#fff;border:1px solid #8E9199;border-bottom:0"></div>
<svg style="left:16px;top:366px" width="15" height="13" viewBox="0 0 15 13"><rect x="0.5" y="0.5" width="14" height="12" fill="#F7F9FD" stroke="#4B5A80"/><rect x="1" y="1" width="13" height="2.2" fill="#3F6FD0"/><path d="M0.5 6 H14.5 M0.5 9 H14.5 M5 3 V12.5 M10 3 V12.5" stroke="#8A93AB" stroke-width="0.9"/></svg>
<div class="t" id="rs" style="left:36.01px;top:367.5px;font-size:11.5px;transform-origin:0 0;transform:scaleX(0.9252)">Results</div>
<svg style="left:85px;top:366px" width="15" height="16" viewBox="0 0 15 16"><path d="M0.5 0.5 H5 L7.5 3 V13.5 H0.5 Z" fill="#EEF2FA" stroke="#8391B0" stroke-width="0.9"/><path d="M5.5 4.5 H10.5 L13.5 7.5 V15.5 H5.5 Z" fill="#F8FAFF" stroke="#6E7C9C" stroke-width="0.9"/><path d="M7 8 H8.5 M7 10.3 H8.5 M7 12.6 H8.5" stroke="#D9382A" stroke-width="1.3"/><path d="M9.5 8 H12 M9.5 10.3 H12 M9.5 12.6 H12" stroke="#3E9B36" stroke-width="1.1"/><path d="M1.5 12.5 H4.5" stroke="#3E9B36" stroke-width="1.2"/></svg>
<div class="t" id="ms" style="left:105.22px;top:369.5px;font-size:11.5px;transform-origin:0 0;transform:scaleX(0.9171)">Messages</div>
<div class="a" style="left:13px;top:387px;width:30.5px;height:16.5px;background:#F3F3F3;border-right:1px solid #E6E6E6;border-bottom:1px solid #E6E6E6"></div>
<div class="a" style="left:44.5px;top:387px;width:105.5px;height:16.5px;background:#F3F3F3;border-right:1px solid #E6E6E6;border-bottom:1px solid #E6E6E6"></div>
<div class="a" style="left:13px;top:405px;width:30.5px;height:17.5px;background:#F1F1F1;border:1px solid #E4E4E4"></div>
<div class="a" style="left:44px;top:404px;width:106px;height:20px;background:#E3EAF4;border:1px dotted #000"></div>
<div class="t" id="g0" style="left:48.42px;top:389.6px;font-size:11.5px;transform-origin:0 0;transform:scaleX(0.9286)">output</div>
<div class="t" id="g1" style="left:18.10px;top:408.6px;font-size:11.5px;transform-origin:0 0;transform:scaleX(0.8500)">1</div>
<div class="t" id="g2" style="left:49.37px;top:408.6px;font-size:11.5px;transform-origin:0 0;transform:scaleX(0.9368)">nt authority\system</div>

<!-- ===== query status (yellow) ===== -->
<div class="a" style="left:6.5px;top:563.5px;width:1289px;height:23px;background:#F0E68C"></div>
<svg style="left:10px;top:566.7px" width="16.5" height="16.5" viewBox="0 0 17 17"><defs><radialGradient id="gg" cx="0.4" cy="0.3" r="0.8"><stop offset="0" stop-color="#8FD17F"/><stop offset="1" stop-color="#2E8E2B"/></radialGradient></defs><circle cx="8.5" cy="8.5" r="7.8" fill="url(#gg)" stroke="#2D7A2A" stroke-width="0.9"/><path d="M4.2 8.8 L7.3 11.8 L12.8 5.2" fill="none" stroke="#fff" stroke-width="2.1"/></svg>
<div class="t" id="qs" style="left:29.88px;top:569px;transform-origin:0 0;transform:scaleX(0.9805)">Query executed successfully.</div>
<div class="a" style="left:897px;top:567px;width:1px;height:16px;background:#C9C07A"></div>
<div class="a" style="left:1092px;top:567px;width:1px;height:16px;background:#C9C07A"></div>
<div class="a" style="left:1139px;top:567px;width:1px;height:16px;background:#C9C07A"></div>
<div class="a" style="left:1182px;top:567px;width:1px;height:16px;background:#C9C07A"></div>
<div class="a" style="left:1237px;top:567px;width:1px;height:16px;background:#C9C07A"></div>
<div class="t" id="s1" style="left:903.05px;top:569px;transform-origin:0 0;transform:scaleX(0.8791)">MSSQLSRV04\SQLSERVER2014 (1...</div>
<div class="t" id="s2" style="left:1097.57px;top:569px;transform-origin:0 0;transform:scaleX(0.9241)">sa (59)</div>
<div class="t" id="s3" style="left:1144.17px;top:569px;transform-origin:0 0;transform:scaleX(1.0357)">msdb</div>
<div class="t" id="s4" style="left:1187.52px;top:569px;transform-origin:0 0;transform:scaleX(0.9126)">00:00:00</div>
<div class="t" id="s5" style="left:1242.13px;top:569px;transform-origin:0 0;transform:scaleX(0.9706)">1 rows</div>

<!-- ===== status bar ===== -->
<div class="a" id="status" style="left:0;top:593px;width:1302px;height:23px;background:#007ACC">
<div class="t" id="b1" style="left:3.65px;transform-origin:0 0;transform:scaleX(0.9259)">Ready</div>
<div class="t" id="b2" style="left:929.01px;transform-origin:0 0;transform:scaleX(0.9825)">Ln 18</div>
<div class="t" id="b3" style="left:1021.51px;transform-origin:0 0;transform:scaleX(0.9630)">Col 1</div>
<div class="t" id="b4" style="left:1113.46px;transform-origin:0 0;transform:scaleX(1.0722)">Ch 1</div>
<div class="t" id="b5" style="left:1249.46px;transform-origin:0 0;transform:scaleX(0.9041)">INS</div>
<svg style="left:1290px;top:13px" width="10" height="10" viewBox="0 0 10 10"><path d="M8 1 H9 M5 4 H6 M8 4 H9 M2 7 H3 M5 7 H6 M8 7 H9" stroke="#7FBCE5" stroke-width="1.2"/></svg>
</div>
<div class="t" id="wm" style="left:1130.68px;top:589.5px;font-size:14.5px;font-weight:normal;color:#fff;font-family:'Liberation Sans','Noto Sans CJK SC',sans-serif;-webkit-text-stroke:0.45px #fff;text-shadow:1px 1px 0 #000,1.6px 1.6px 0.5px #000,0 0 1.5px rgba(0,0,0,.85),0 0 1.5px rgba(0,0,0,.6);transform-origin:0 0;transform:scaleX(1.0216)">安全客 ( bobao.360.cn )</div>
</body></html>
